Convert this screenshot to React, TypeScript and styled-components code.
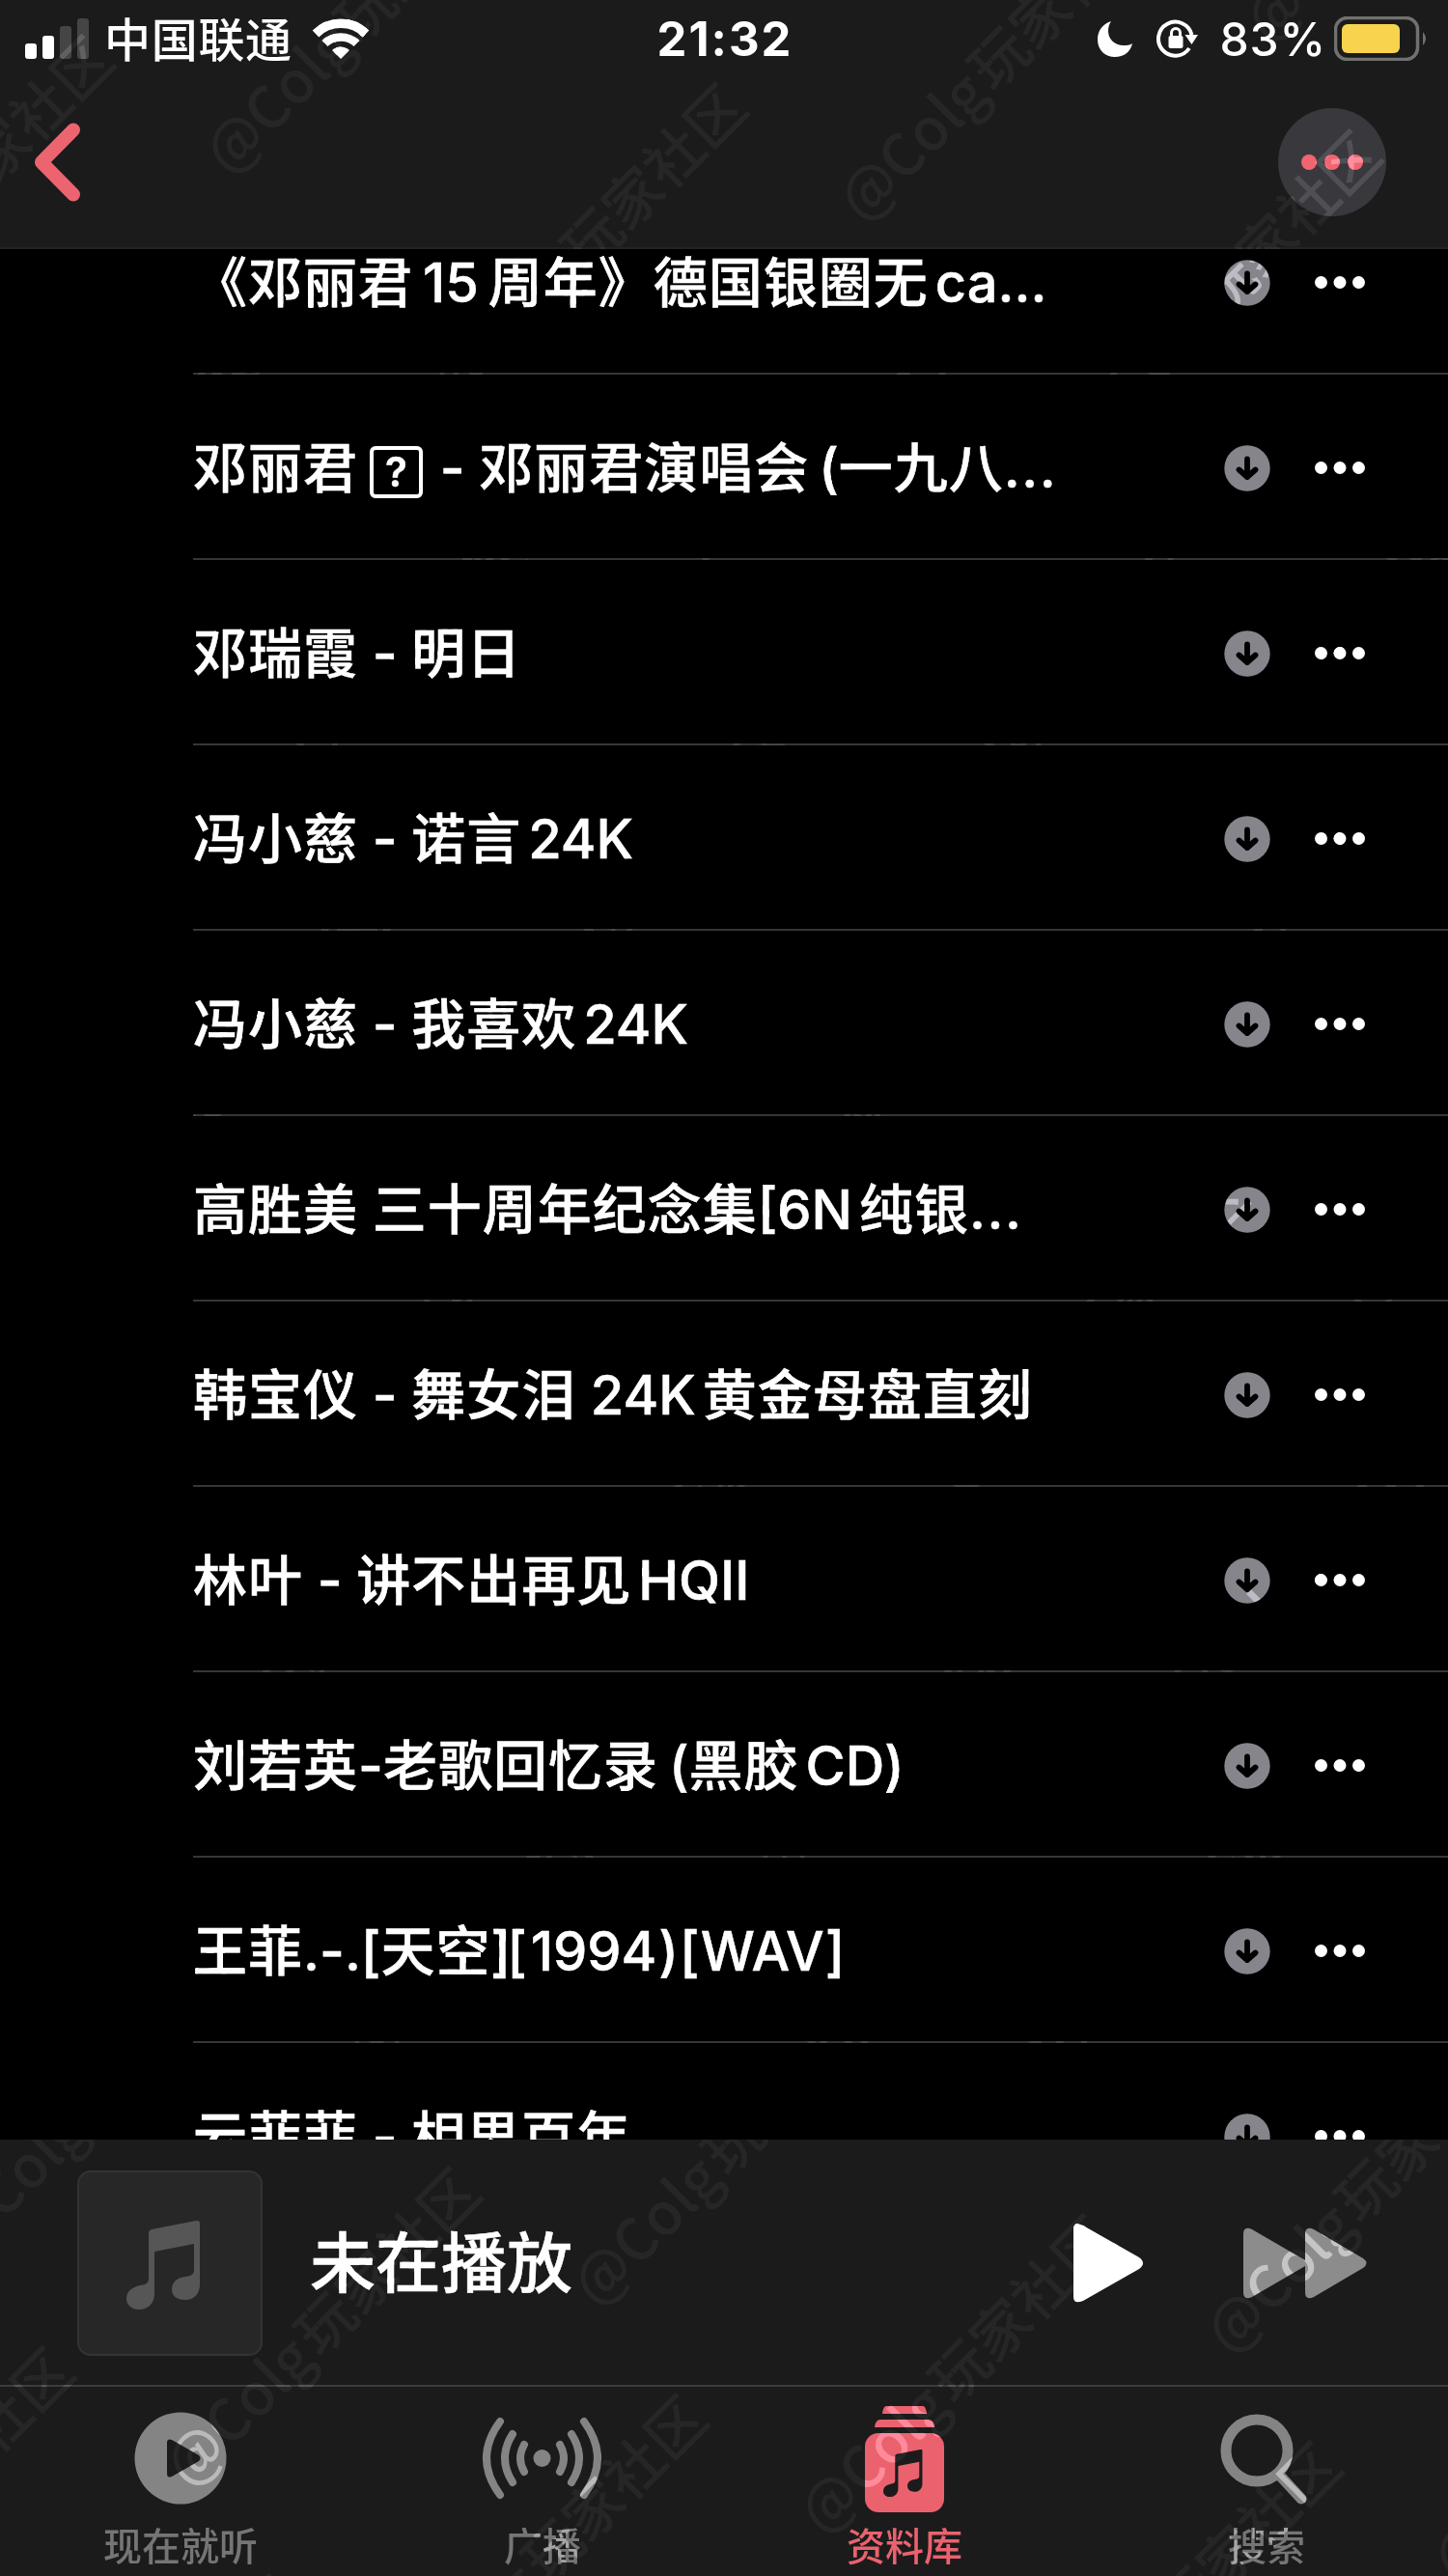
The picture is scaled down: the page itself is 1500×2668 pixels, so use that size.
import React from "react";
import styled, { createGlobalStyle } from "styled-components";

const latin = `Inter, "Noto Sans CJK SC", sans-serif`;
const cjk = `"Noto Sans CJK SC", sans-serif`;

const Global = createGlobalStyle`
  * { box-sizing: border-box; }
  body { margin: 0; background: #000; }
`;

const Screen = styled.main`
  position: relative;
  width: 1500px;
  height: 2668px;
  overflow: hidden;
  display: flex;
  flex-direction: column;
  background: #000;
  color: #fff;
  font-family: ${latin};
  isolation: isolate;
`;

const Header = styled.header`
  flex: none;
  height: 258px;
  background: #1b1b1b;
  border-bottom: 2px solid #232323;
  display: flex;
  flex-direction: column;
`;

const StatusBar = styled.div`
  height: 80px;
  display: grid;
  grid-template-columns: 1fr auto 1fr;
  align-items: center;
  padding: 0 22px 0 26px;
`;

const StatusGroup = styled.div<{ $end?: boolean }>`
  display: flex;
  align-items: center;
  justify-content: ${(p) => (p.$end ? "flex-end" : "flex-start")};
`;

const Carrier = styled.span`
  font: 500 48px/76px ${cjk};
  letter-spacing: 0.7px;
  padding-bottom: 4px;
  margin: 0 20px 0 14px;
`;

const Clock = styled.span`
  font-size: 49px;
  font-weight: 700;
  line-height: 78px;
  padding-top: 2px;
  letter-spacing: 2px;
  margin-right: 2px;
`;

const Percent = styled.span`
  font-size: 48px;
  font-weight: 500;
  line-height: 78px;
  padding-top: 2px;
  letter-spacing: 0.8px;
  margin: 0 8px 0 22px;
`;

const StatusIcons = styled.div`
  display: flex;
  align-items: center;
  gap: 24px;
`;

const NavBar = styled.nav`
  height: 176px;
  display: flex;
  align-items: center;
  justify-content: space-between;
  padding: 0 64px 0 35px;
`;

const PlainButton = styled.button`
  border: 0;
  padding: 0;
  background: none;
  display: flex;
`;

const RoundButton = styled(PlainButton)`
  width: 112px;
  height: 112px;
  border-radius: 50%;
  background: #39383d;
  align-items: center;
  justify-content: center;
`;

const ListViewport = styled.section`
  flex: none;
  height: 1958px;
  overflow: hidden;
`;

const List = styled.ul`
  list-style: none;
  margin: -62px 0 0;
  padding: 0 0 0 200px;
`;

const Row = styled.li`
  height: 192px;
  border-bottom: 2px solid #363636;
  display: flex;
  align-items: center;
  padding: 3px 86px 0 0;
`;

const Title = styled.span`
  flex: 1;
  white-space: pre;
  font-size: 56px;
  font-weight: 500;
  line-height: 80px;
  letter-spacing: 1px;
  word-spacing: -1.3px;
  -webkit-text-stroke: 0.5px #fff;
`;

const LatinRun = styled.span<{ $dots?: boolean }>`
  letter-spacing: ${(p) => (p.$dots ? 1.5 : 0)}px;
`;

const Gap = styled.span<{ $w: number }>`
  margin-left: ${(p) => p.$w}px;
`;

const MissingGlyph = styled.span`
  display: inline-block;
  width: 55px;
  height: 54px;
  margin: 0 3px 0 12px;
  border: 4px solid #fff;
  border-radius: 6px;
  font-size: 42px;
  font-weight: 600;
  line-height: 46px;
  letter-spacing: 0;
  text-align: center;
  vertical-align: 1px;
`;

const RowActions = styled.div`
  display: flex;
  align-items: center;
  gap: 46px;
`;

const Player = styled.section`
  flex: none;
  height: 256px;
  background: #1b1b1b;
  border-bottom: 2px solid #3c3c3c;
  display: flex;
  align-items: center;
  padding: 2px 84px 0 80px;
`;

const Artwork = styled.div`
  width: 192px;
  height: 192px;
  border: 2px solid #333;
  border-radius: 14px;
  background: #272727;
  display: flex;
  align-items: center;
  justify-content: center;
  padding: 3px 13px 0 0;
`;

const NowPlaying = styled.span`
  flex: 1;
  margin-left: 49px;
  padding-bottom: 8px;
  font: 500 68px/100px ${cjk};
  -webkit-text-stroke: 0.5px #fff;
`;

const Controls = styled.div`
  display: flex;
  align-items: center;
  gap: 104px;
`;

const TabBar = styled.nav`
  flex: none;
  height: 196px;
  background: #1b1b1b;
  display: grid;
  grid-template-columns: repeat(4, 1fr);
`;

const Tab = styled.button<{ $active?: boolean }>`
  border: 0;
  padding: 0 1px 0 0;
  background: none;
  display: flex;
  flex-direction: column;
  align-items: center;
  color: ${(p) => (p.$active ? "#ea626e" : "#848484")};
`;

const TabLabel = styled.span<{ $active?: boolean }>`
  margin-top: -6px;
  font: 500 40px/50px ${cjk};
  color: ${(p) => (p.$active ? "#ea626e" : "#757575")};
`;

const WatermarkLayer = styled.div`
  position: absolute;
  inset: 0;
  overflow: hidden;
  pointer-events: none;
  mix-blend-mode: color-dodge;
`;

const Watermark = styled.span`
  position: absolute;
  white-space: nowrap;
  color: #4a4a4a;
  font: 500 60px/60px ${cjk};
  word-spacing: -9px;
  transform-origin: 28px 30px;
  transform: rotate(-45deg);
`;

const SignalIcon = () => (
  <svg width="68" height="44" viewBox="0 0 68 44">
    <rect x="0" y="27" width="12" height="16" rx="3" fill="#fff" />
    <rect x="18" y="19" width="12" height="24" rx="3" fill="#fff" />
    <rect x="36" y="9" width="12" height="34" rx="3" fill="#454545" />
    <rect x="54" y="1" width="12" height="42" rx="3" fill="#454545" />
  </svg>
);

const WifiIcon = () => (
  <svg width="60" height="44" viewBox="0 0 60 44" fill="none" stroke="#fff">
    <path d="M4 17 A37 37 0 0 1 56 17" strokeWidth="9.500" />
    <path d="M13.500 27 A24 24 0 0 1 46.500 27" strokeWidth="8.500" />
    <path d="M21 34 A13 13 0 0 1 39 34 L30 43 Z" fill="#fff" stroke="none" />
  </svg>
);

const MoonIcon = () => (
  <svg width="38" height="40" viewBox="0 0 38 40">
    <path d="M15 2 C6 5 1 12 1 21 C1 32 9 39 19 39 C28 39 35 34 37 25 C34 27 31 27 28 27 C18 27 12 20 12 12 C12 8 13 5 15 2 Z" fill="#fff" />
  </svg>
);

const RotationLockIcon = () => (
  <svg width="44" height="42" viewBox="0 0 44 42" fill="none" stroke="#fff" strokeWidth="4">
    <path d="M34 31 A17.500 17.500 0 1 1 36.500 17" />
    <path d="M29.500 17 H43 L36.500 27 Z" fill="#fff" stroke="none" />
    <rect x="12.500" y="18" width="15" height="13" rx="2" fill="#fff" stroke="none" />
    <path d="M15.500 19 V15 A4.500 4.500 0 0 1 24.500 15 V19" strokeWidth="3" />
  </svg>
);

const BatteryIcon = () => (
  <svg width="96" height="46" viewBox="0 0 96 46">
    <rect x="1.500" y="1.500" width="85" height="43" rx="12" fill="none" stroke="#71716f" strokeWidth="3.500" />
    <rect x="8" y="8" width="60" height="30" rx="6" fill="#f8d44e" />
    <path d="M92 16 Q98 23 92 30 Z" fill="#71716f" />
  </svg>
);

const BackIcon = () => (
  <svg width="50" height="84" viewBox="0 0 50 84">
    <path d="M41 8.500 L8 42 L41 75.500" fill="none" stroke="#ec6470" strokeWidth="14" strokeLinecap="round" strokeLinejoin="round" />
  </svg>
);

const Dots = ({ r, gap, color }: { r: number; gap: number; color: string }) => (
  <svg width={gap * 2 + r * 2} height={r * 2}>
    {[0, 1, 2].map((i) => (
      <circle key={i} cx={r + gap * i} cy={r} r={r} fill={color} />
    ))}
  </svg>
);

const DownloadIcon = () => (
  <svg width="48" height="48" viewBox="0 0 48 48">
    <circle cx="24" cy="24" r="23.700" fill="#86858b" />
    <path d="M24 14.500 V33 M15.500 25.500 L24 33 L32.500 25.500" fill="none" stroke="#000" strokeWidth="5.800" strokeLinecap="round" strokeLinejoin="round" />
  </svg>
);

const NoteIcon = ({ width, height, color }: { width: number; height: number; color: string }) => (
  <svg width={width} height={height} viewBox="0 0 77 92" preserveAspectRatio="none">
    <path
      d="M26 9 L72 0 Q76 -1 76 3 V66 C76 76 70 82 61 82 C52 82 47 78 47 71 C47 63 53 59 61 58 Q70 57 70 52 V24 L29 32 V76 C29 86 22 92 13 92 C5 92 0 87 0 81 C0 73 6 69 14 67 Q23 66 23 61 V13 Q23 10 26 9 Z"
      fill={color}
    />
  </svg>
);

const PlayIcon = () => (
  <svg width="72" height="82" viewBox="0 0 72 82">
    <path d="M0 6 Q0 -3 10 2 L68 35 Q76 41 68 47 L10 80 Q0 84 0 76 Z" fill="#fff" />
  </svg>
);

const ForwardIcon = () => (
  <svg width="128" height="74" viewBox="0 0 128 74" fill="#8c8c8c">
    <path d="M0 7 Q0 -2 9 2 L64 34 V40 L9 72 Q0 76 0 67 Z" />
    <path d="M64 7 Q64 -2 73 2 L124 32 Q131 37 124 42 L73 72 Q64 76 64 67 Z" />
  </svg>
);

const ListenIcon = () => (
  <svg width="150" height="144" viewBox="0 0 150 144">
    <circle cx="75" cy="74" r="47.500" fill="#848484" />
    <path d="M61 58 Q61 53 66 55 L94 71 Q97 74 94 77 L66 93 Q61 95 61 90 Z" fill="#1b1b1b" />
  </svg>
);

const RadioIcon = () => (
  <svg width="150" height="144" viewBox="0 0 150 144" fill="none" stroke="#848484" strokeWidth="8" strokeLinecap="round">
    <circle cx="74.500" cy="74" r="9" fill="#848484" stroke="none" />
    <path d="M56 60 Q48 74 56 88 M44 49 Q28 74 44 99 M31 36 Q3 74 31 112" />
    <path d="M93 60 Q101 74 93 88 M105 49 Q121 74 105 99 M118 36 Q146 74 118 112" />
  </svg>
);

const LibraryIcon = () => (
  <svg width="150" height="144" viewBox="0 0 150 144" fill="#ea626e">
    <path d="M56 20 H94 Q97 20 98 28 H52 Q53 20 56 20 Z" />
    <path d="M50 34 H100 Q105 34 106 42 H44 Q45 34 50 34 Z" />
    <rect x="34" y="48" width="82" height="82" rx="14" />
    <svg x="53" y="65" width="41" height="49">
      <NoteIcon width={41} height={49} color="#1b1b1b" />
    </svg>
  </svg>
);

const SearchIcon = () => (
  <svg width="150" height="144" viewBox="0 0 150 144" fill="none" stroke="#848484">
    <circle cx="65" cy="66" r="32" strokeWidth="11" />
    <path d="M88 91 L111 116" strokeWidth="11" strokeLinecap="round" />
  </svg>
);

// Text parts with the extra spacing, in pixels, between two scripts.
type Part = string | number | { missing: string };

const albums: Part[][] = [
  ["《邓丽君", 10, "15", 10, "周年》德国银圈无", 7, "ca..."],
  ["邓丽君", { missing: "?" }, " - 邓丽君演唱会", 10, "(一九八..."],
  ["邓瑞霞 - 明日"],
  ["冯小慈 - 诺言", 7, "24K"],
  ["冯小慈 - 我喜欢", 7, "24K"],
  ["高胜美 三十周年纪念集[6N", 7, "纯银..."],
  ["韩宝仪 - 舞女泪 24K", 7, "黄金母盘直刻"],
  ["林叶 - 讲不出再见", 7, "HQII"],
  ["刘若英-老歌回忆录", 11, "(黑胶", 7, "CD)"],
  ["王菲.-.[天空]", -4, "[", 4, "1994", 2, ")", 1, "[", 1, "WAV", 1, "]"],
  ["云菲菲 - 相思百年"],
];

const AlbumTitle = ({ parts }: { parts: Part[] }) => (
  <Title>
    {parts.map((part, i) => {
      if (typeof part === "number") return <Gap key={i} $w={part} />;
      if (typeof part === "object") return <MissingGlyph key={i}>{part.missing}</MissingGlyph>;
      return part.split(/([\x21-\x7e]+)/).map((run, j) =>
        j % 2 ? (
          <LatinRun key={`${i}-${j}`} $dots={run === "..."}>
            {run}
          </LatinRun>
        ) : (
          run
        ),
      );
    })}
  </Title>
);

const tabs = [
  { label: "现在就听", icon: <ListenIcon /> },
  { label: "广播", icon: <RadioIcon /> },
  { label: "资料库", icon: <LibraryIcon />, active: true },
  { label: "搜索", icon: <SearchIcon /> },
];

// Staggered lattice of "@" centres that covers the whole screen.
const marks: { x: number; y: number }[] = [];
for (let a = -8; a <= 6; a++) {
  for (let b = -6; b <= 20; b++) {
    const x = 239 + a * 656.5 + b * 235;
    const y = 145 + a * 49 + b * 235.5;
    if (x > -360 && x < 1530 && y > -30 && y < 3020) marks.push({ x, y });
  }
}

export default function App() {
  return (
    <Screen>
      <Global />
      <Header>
        <StatusBar>
          <StatusGroup>
            <SignalIcon />
            <Carrier>中国联通</Carrier>
            <WifiIcon />
          </StatusGroup>
          <Clock>21:32</Clock>
          <StatusGroup $end>
            <StatusIcons>
              <MoonIcon />
              <RotationLockIcon />
            </StatusIcons>
            <Percent>83%</Percent>
            <BatteryIcon />
          </StatusGroup>
        </StatusBar>
        <NavBar>
          <PlainButton aria-label="返回"><BackIcon /></PlainButton>
          <RoundButton aria-label="更多"><Dots r={8} gap={24} color="#f06570" /></RoundButton>
        </NavBar>
      </Header>
      <ListViewport>
        <List>
          {albums.map((parts, i) => (
            <Row key={i}>
              <AlbumTitle parts={parts} />
              <RowActions>
                <DownloadIcon />
                <Dots r={6.5} gap={19.5} color="#fff" />
              </RowActions>
            </Row>
          ))}
        </List>
      </ListViewport>
      <Player>
        <Artwork><NoteIcon width={77} height={92} color="#565656" /></Artwork>
        <NowPlaying>未在播放</NowPlaying>
        <Controls>
          <PlayIcon />
          <ForwardIcon />
        </Controls>
      </Player>
      <TabBar>
        {tabs.map((tab) => (
          <Tab key={tab.label} $active={tab.active}>
            {tab.icon}
            <TabLabel $active={tab.active}>{tab.label}</TabLabel>
          </Tab>
        ))}
      </TabBar>
      <WatermarkLayer aria-hidden>
        {marks.map((m, i) => (
          <Watermark key={i} style={{ left: m.x - 28, top: m.y - 30 }}>@Colg 玩家社区</Watermark>
        ))}
      </WatermarkLayer>
    </Screen>
  );
}
